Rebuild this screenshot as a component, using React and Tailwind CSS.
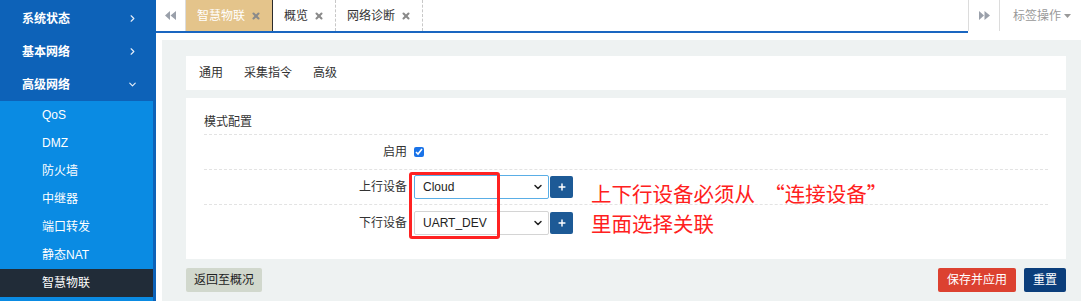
import { ChevronRight, ChevronDown, X, Plus } from "lucide-react";

const FONT = { fontFamily: '"Liberation Sans", "Noto Sans CJK SC", sans-serif' };

const topMenu = [
  { label: "系统状态", open: false },
  { label: "基本网络", open: false },
  { label: "高级网络", open: true },
];
const subMenu = ["QoS", "DMZ", "防火墙", "中继器", "端口转发", "静态NAT", "智慧物联"];

function Backward({ className }) {
  return (
    <svg width="11" height="9" viewBox="0 0 11 9" className={className}>
      <path d="M5 0 L0 4.5 L5 9 Z M11 0 L5.5 4.5 L11 9 Z" fill="currentColor" />
    </svg>
  );
}

function Forward({ className }) {
  return (
    <svg width="11" height="9" viewBox="0 0 11 9" className={className}>
      <path d="M0 0 L5 4.5 L0 9 Z M5.5 0 L11 4.5 L5.5 9 Z" fill="currentColor" />
    </svg>
  );
}

function Tab({ label, active, dashed }) {
  return (
    <div
      className={`flex h-full items-center gap-[6px] px-[11px] text-[12px] ${
        active
          ? "bg-[#e4c48b] text-white border-r border-[#2b2b2b]"
          : `text-[#333] ${dashed ? "border-r border-dashed border-[#c8c8c8]" : ""}`
      }`}
    >
      <span>{label}</span>
      <X size={10} strokeWidth={5} className="text-[#8a8a8a]" />
    </div>
  );
}

function FormRow({ label, last, children }) {
  return (
    <div className={`flex h-[35px] items-center ${last ? "" : "border-b border-dashed border-[#e3e3e3]"}`}>
      <div className="w-[210px] pr-[7px] text-right text-[12px] text-[#333]">{label}</div>
      <div className="flex items-center">{children}</div>
    </div>
  );
}

function DeviceSelect({ value, focus }) {
  return (
    <div className="flex items-center">
      <div
        className={`flex h-[24px] w-[135px] items-center justify-between rounded-[2px] border bg-white pl-[8px] pr-[4px] text-[12px] text-[#222] ${
          focus ? "border-[#5aaee6]" : "border-[#d4d4d4]"
        }`}
      >
        <span>{value}</span>
        <ChevronDown size={12} strokeWidth={3} className="text-[#222]" />
      </div>
      <button className="ml-[1px] flex h-[22px] w-[23px] items-center justify-center rounded-[2px] bg-[#1d5a96] text-white">
        <Plus size={10} strokeWidth={3.5} />
      </button>
    </div>
  );
}

export default function App() {
  return (
    <div className="relative flex h-[301px] w-[1081px] overflow-hidden bg-white" style={FONT}>
      {/* Sidebar */}
      <aside className="flex w-[156px] shrink-0 flex-col bg-[#0d62b8] pt-[2px]">
        {topMenu.map((m) => (
          <div key={m.label} className="flex h-[33px] items-center justify-between pl-[22px] pr-[18px] text-[12px] font-bold text-white">
            <span>{m.label}</span>
            {m.open ? (
              <ChevronDown size={11} strokeWidth={2.5} className="text-[#e6eef8]" />
            ) : (
              <ChevronRight size={11} strokeWidth={2.5} className="text-[#e6eef8]" />
            )}
          </div>
        ))}
        <div className="w-[153px] flex-1 bg-[#0a8be3]">
          {subMenu.map((s) => (
            <div
              key={s}
              className={`flex h-[28px] items-center pl-[42px] text-[12px] text-white ${
                s === "智慧物联" ? "bg-[#212c38]" : ""
              }`}
            >
              {s}
            </div>
          ))}
        </div>
      </aside>

      {/* Main */}
      <main className="flex min-w-0 flex-1 flex-col">
        {/* Tab bar */}
        <div className="flex h-[33px] shrink-0">
          <div className="flex flex-1 border-b-2 border-[#1a66c0]">
            <div className="flex w-[30px] items-center justify-center border-r border-[#dcdcdc]">
              <Backward className="text-[#9aa0aa]" />
            </div>
            <Tab label="智慧物联" active />
            <Tab label="概览" dashed />
            <Tab label="网络诊断" dashed />
          </div>
          <div className="flex h-[31px] w-[31px] items-center justify-center border-l border-[#dcdcdc]">
            <Forward className="text-[#9aa0aa]" />
          </div>
          <div className="flex h-[31px] w-[82px] items-center gap-[3px] border-l border-[#dcdcdc] pl-[13px] text-[12px] text-[#999]">
            <span>标签操作</span>
            <svg width="7" height="4" viewBox="0 0 7 4">
              <path d="M0 0 L7 0 L3.5 4 Z" fill="#999" />
            </svg>
          </div>
        </div>

        {/* Content frame */}
        <div className="flex-1 bg-white pl-[6px] pt-[7px]">
          <div className="h-full bg-[#eef2f2] pl-[24px] pr-[15px] pt-[16px]">
            <div className="flex h-[34px] items-center gap-[21px] bg-white pl-[13px] text-[12px] text-[#333]">
              <span>通用</span>
              <span>采集指令</span>
              <span>高级</span>
            </div>

            <div className="mt-[8px] bg-white px-[18px] pb-[19px] pt-[12px]">
              <div className="flex h-[25px] items-center border-b border-dashed border-[#e3e3e3] text-[12px] text-[#333]">
                模式配置
              </div>
              <FormRow label="启用">
                <input
                  type="checkbox"
                  defaultChecked
                  className="m-0 h-[10px] w-[10px] accent-[#1a73e8]"
                />
              </FormRow>
              <FormRow label="上行设备">
                <DeviceSelect value="Cloud" focus />
              </FormRow>
              <FormRow label="下行设备" last>
                <DeviceSelect value="UART_DEV" />
              </FormRow>
            </div>

            <div className="mt-[9px] flex items-center justify-between">
              <button className="h-[24px] rounded-[2px] bg-[#d1d8cd] px-[8px] text-[12px] text-[#222]">
                返回至概况
              </button>
              <div className="flex gap-[8px]">
                <button className="h-[24px] rounded-[2px] bg-[#dc4130] px-[9px] text-[12px] text-white">
                  保存并应用
                </button>
                <button className="h-[24px] rounded-[2px] bg-[#0b3e7b] px-[9px] text-[12px] text-white">
                  重置
                </button>
              </div>
            </div>
          </div>
        </div>
      </main>

      {/* Annotation overlay */}
      <div className="pointer-events-none absolute left-[409px] top-[172px] h-[67px] w-[91px] rounded-[3px] border-[3px] border-[#ff2222]" />
      <div
        className="pointer-events-none absolute left-[591px] top-[178px] text-[20.5px] leading-[30px] text-[#ff2020]"
        style={{ fontFamily: '"Noto Sans CJK SC", sans-serif' }}
      >
        <div>上下行设备必须从{"\u00a0\u00a0"}“连接设备”</div>
        <div>里面选择关联</div>
      </div>
    </div>
  );
}
